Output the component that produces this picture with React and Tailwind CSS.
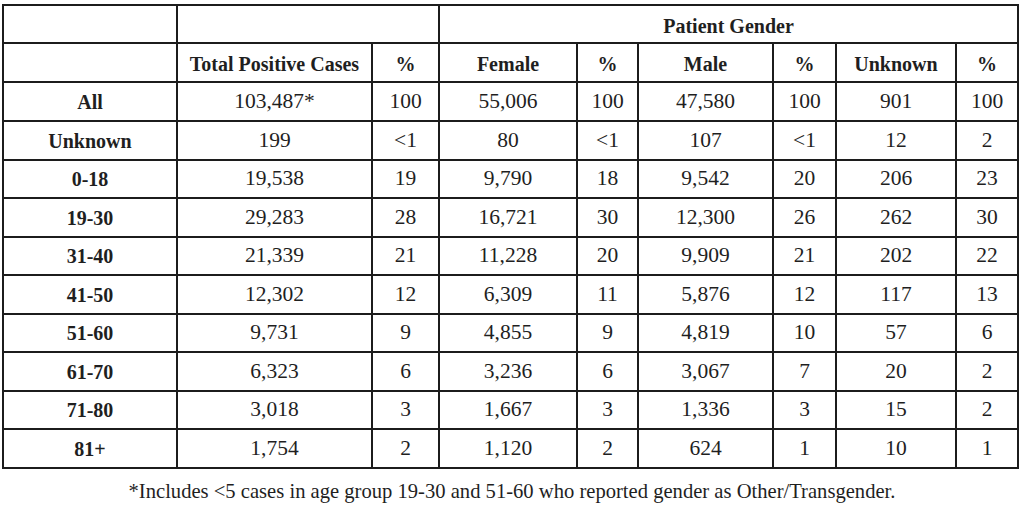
import React from 'react';

const rows = [
  ['All', '103,487*', '100', '55,006', '100', '47,580', '100', '901', '100'],
  ['Unknown', '199', '<1', '80', '<1', '107', '<1', '12', '2'],
  ['0-18', '19,538', '19', '9,790', '18', '9,542', '20', '206', '23'],
  ['19-30', '29,283', '28', '16,721', '30', '12,300', '26', '262', '30'],
  ['31-40', '21,339', '21', '11,228', '20', '9,909', '21', '202', '22'],
  ['41-50', '12,302', '12', '6,309', '11', '5,876', '12', '117', '13'],
  ['51-60', '9,731', '9', '4,855', '9', '4,819', '10', '57', '6'],
  ['61-70', '6,323', '6', '3,236', '6', '3,067', '7', '20', '2'],
  ['71-80', '3,018', '3', '1,667', '3', '1,336', '3', '15', '2'],
  ['81+', '1,754', '2', '1,120', '2', '624', '1', '10', '1'],
];

const heights = ['h-[39px]', 'h-[39px]', 'h-[38px]', 'h-[39px]', 'h-[38px]', 'h-[39px]', 'h-[38px]', 'h-[39px]', 'h-[38px]', 'h-[39px]'];

const cell = 'flex items-center justify-center border-r-2 border-b-2 border-[#1c1c1c]';

export default function App() {
  return (
    <div className="bg-white w-[1024px] h-[522px] pt-[4px] pl-[2px] text-[#1f1f1f] font-['Liberation_Serif',serif] text-[21.5px] leading-none">
      <div className="grid w-[1017px] grid-cols-[174px_195px_67px_138px_61px_135px_63px_120px_62px] border-l-2 border-t-2 border-[#1c1c1c]">
        {/* header row 1 */}
        <div className={`${cell} h-[38px]`}></div>
        <div className={`${cell} h-[38px] col-span-2`}></div>
        <div className={`${cell} h-[38px] col-span-6 font-bold text-[20px] pt-[3px]`}>Patient Gender</div>

        {/* header row 2 */}
        {['', 'Total Positive Cases', '%', 'Female', '%', 'Male', '%', 'Unknown', '%'].map((h, i) => (
          <div key={i} className={`${cell} h-[39px] font-bold text-[20px] pt-[2px]`}>{h}</div>
        ))}

        {rows.map((r, ri) =>
          r.map((v, ci) => (
            <div key={`${ri}-${ci}`} className={`${cell} ${heights[ri]} ${ci === 0 ? 'font-bold text-[20px]' : ''}`}>
              {v}
            </div>
          ))
        )}
      </div>

      <p className="text-center w-[1024px] -ml-[2px] mt-[12px] text-[20.6px]">
        *Includes &lt;5 cases in age group 19-30 and 51-60 who reported gender as Other/Transgender.
      </p>
    </div>
  );
}
